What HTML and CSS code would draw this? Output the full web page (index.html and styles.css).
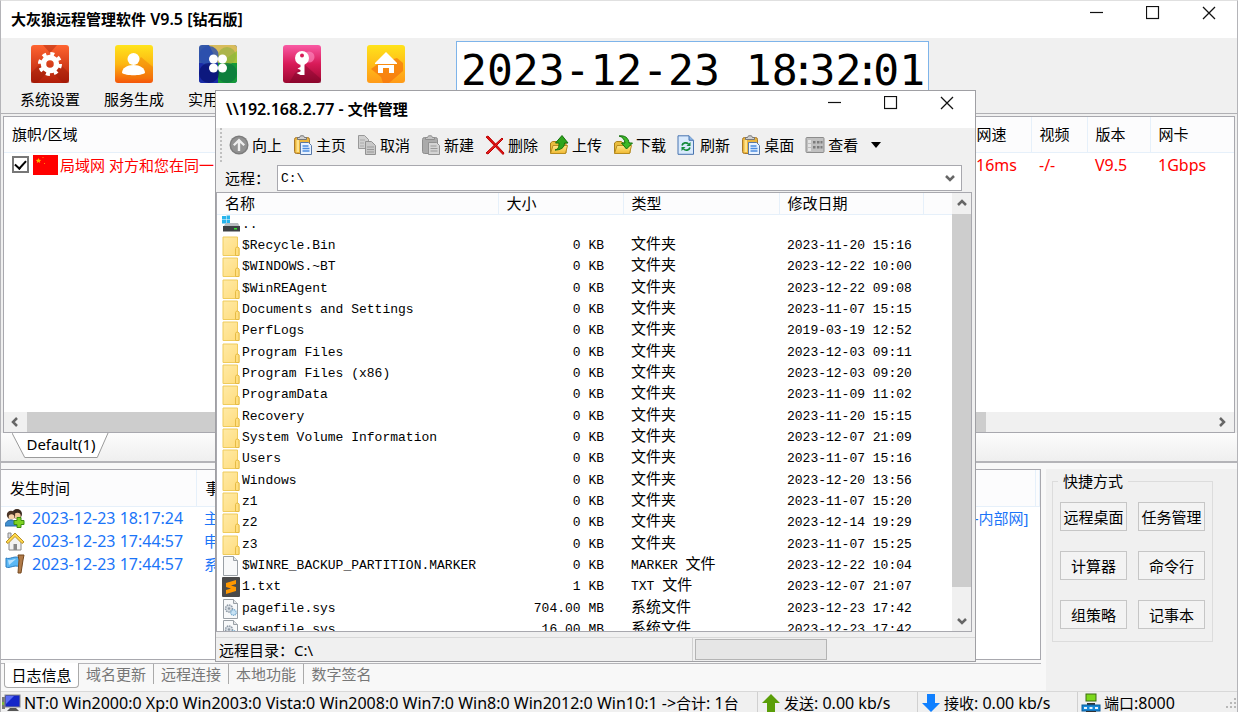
FILE: index.html
```html
<!DOCTYPE html>
<html lang="zh-CN">
<head>
<meta charset="utf-8">
<meta name="viewport" content="width=device-width, initial-scale=1">
<title>大灰狼远程管理软件 V9.5 [钻石版]</title>
<link rel="stylesheet" href="styles.css">
</head>
<body>
<svg class="defs" aria-hidden="true">
  <defs>
    <linearGradient id="gRed" x1="0" y1="0" x2="0" y2="1"><stop offset="0" stop-color="#ff6430"/><stop offset="1" stop-color="#b01c08"/></linearGradient>
    <linearGradient id="gYel" x1="0" y1="0" x2="0" y2="1"><stop offset="0" stop-color="#ffe41c"/><stop offset=".5" stop-color="#fdb813"/><stop offset="1" stop-color="#f4560a"/></linearGradient>
    <linearGradient id="gPink" x1="0" y1="0" x2="0" y2="1"><stop offset="0" stop-color="#f95aa4"/><stop offset=".5" stop-color="#d81a58"/><stop offset="1" stop-color="#9c0830"/></linearGradient>
    <linearGradient id="gHome" x1="0" y1="0" x2="0" y2="1"><stop offset="0" stop-color="#ffe31a"/><stop offset="1" stop-color="#ff9a18"/></linearGradient>
    <linearGradient id="gFold" x1="0" y1="0" x2="1" y2="1"><stop offset="0" stop-color="#ffeaa6"/><stop offset="1" stop-color="#ffdc7c"/></linearGradient>
    <linearGradient id="gOpen" x1="0" y1="0" x2="0" y2="1"><stop offset="0" stop-color="#ffe88a"/><stop offset="1" stop-color="#f0b830"/></linearGradient>
    <clipPath id="tile"><rect width="38" height="38" rx="3"/></clipPath>
    <symbol id="min" viewBox="0 0 14 14"><path d="M0 6.500h13" stroke="#111" stroke-width="1.2"/></symbol>
    <symbol id="max" viewBox="0 0 14 14"><rect x=".500" y=".500" width="12" height="12" fill="none" stroke="#111" stroke-width="1.2"/></symbol>
    <symbol id="close" viewBox="0 0 14 14"><path d="M1 1l12 12M13 1L1 13" stroke="#111" stroke-width="1.3"/></symbol>
    <symbol id="chev" viewBox="0 0 10 10"><path d="M1 3l4 4 4-4" fill="none" stroke="#666" stroke-width="2.500"/></symbol>
    <symbol id="folder" viewBox="0 0 18 20"><path d="M1 1h14.500v10l1.500.8V19.500H1z" fill="url(#gFold)" stroke="#efcb5c"/><path d="M13.500 19.500v-7l1-1.500h1.500l1 1.500v7z" fill="#ffdf80" stroke="#e6bb45"/></symbol>
    <symbol id="file" viewBox="0 0 18 20"><path d="M1.500.5h10l4 4v15h-14z" fill="#f8f9fa" stroke="#9aa0a6"/><path d="M11.500.5v4h4" fill="#e4e6e8" stroke="#9aa0a6"/></symbol>
    <symbol id="sys" viewBox="0 0 18 20"><use href="#file"/><circle cx="7" cy="9.500" r="3.500" fill="#d8dee4" stroke="#8d99a5" stroke-width="1.500" stroke-dasharray="1.500 .8"/><circle cx="7" cy="9.500" r="1.200" fill="#8d99a5"/><circle cx="11.500" cy="13.500" r="2.800" fill="#c7e2f4" stroke="#79abcf" stroke-width="1.300" stroke-dasharray="1.200 .7"/></symbol>
    <symbol id="clip" viewBox="0 0 20 20"><rect x="1.500" y="2.500" width="15" height="16" rx="2" fill="#eab53c" stroke="#a8782a"/><path d="M3.500 5h2.500v12H3.500z" fill="#ffe38c"/><path d="M4.500 4.500V2.500h2l1-1.700h3l1 1.700h2v2z" fill="#d0d0d0" stroke="#777"/><path d="M7.500 7.500h8l3 3v9h-11z" fill="#e9f3ff" stroke="#5878a8"/><path d="M9.500 11h6M9.500 13.500h7M9.500 16h7" stroke="#4b8ce0" stroke-width="1.300"/></symbol>
    <symbol id="clipg" viewBox="0 0 20 20"><rect x="1.500" y="2.500" width="15" height="16" rx="2" fill="#aaa" stroke="#8e8e8e"/><path d="M4.500 4.500V2.500h2l1-1.700h3l1 1.700h2v2z" fill="#c4c4c4" stroke="#8e8e8e"/><path d="M7.500 7.500h8l3 3v9h-11z" fill="#d4d4d4" stroke="#929292"/><path d="M9.500 11h6M9.500 13.500h7M9.500 16h7" stroke="#999" stroke-width="1.200"/></symbol>
    <symbol id="open" viewBox="0 0 20 20"><path d="M1.500 18V8l2-1.500h5L10 8h7v10z" fill="#e9bd3e" stroke="#a8801c"/><path d="M1.500 18.500l2.500-8h14.500l-2 8z" fill="url(#gOpen)" stroke="#b88d20"/></symbol>
  </defs>
</svg>

<main class="app">
  <header class="titlebar">
    <h1 class="title"><span class="zh">大灰狼远程管理软件</span> V9.5 [<span class="zh">钻石版</span>]</h1>
    <div class="winbtns">
      <button class="winbtn" aria-label="最小化"><svg><use href="#min"/></svg></button>
      <button class="winbtn" aria-label="最大化"><svg><use href="#max"/></svg></button>
      <button class="winbtn" aria-label="关闭"><svg><use href="#close"/></svg></button>
    </div>
  </header>

  <nav class="toolbar">
    <div class="tools">
      <button class="tool"><svg viewBox="0 0 38 38"><rect width="38" height="38" rx="3" fill="url(#gRed)"/><path d="M0 28l8-8 8 8-10 10H0zM38 28l-8-8-8 8 10 10h6zM12 0h14l-7 8z" fill="#8e1806" opacity=".35"/><circle cx="19" cy="19" r="9.500" fill="none" stroke="#fff" stroke-width="5" stroke-dasharray="3.730 3.730"/><circle cx="19" cy="19" r="6.500" fill="none" stroke="#fff" stroke-width="5.500"/></svg><span>系统设置</span></button>
      <button class="tool"><svg viewBox="0 0 38 38"><rect width="38" height="38" rx="3" fill="url(#gYel)"/><path d="M26 12l12 10v12H10z" fill="#f07808" opacity=".45"/><circle cx="18.500" cy="14" r="6" fill="#fff"/><path d="M7 28c0-5 5-8 11.500-8S30 23 30 28c-4 3-19 3-23 0z" fill="#fff"/></svg><span>服务生成</span></button>
      <button class="tool"><svg viewBox="0 0 38 38"><g clip-path="url(#tile)"><rect width="38" height="38" fill="#3558a8"/><path d="M10 0h28v10L19 18z" fill="#d8bc5c"/><path d="M38 6v16L19 19z" fill="#a4c43a"/><path d="M19 18l19 0v20H19z" fill="#159a38"/><path d="M0 18h19v20H0z" fill="#1a2ca8"/><circle cx="10" cy="11" r="10" fill="#2b4fae" opacity=".8"/><circle cx="28" cy="11" r="9" fill="#8fb040" opacity=".6"/><circle cx="28" cy="28" r="10" fill="#0c7440" opacity=".7"/><circle cx="10" cy="28" r="10" fill="#07106c" opacity=".7"/></g><g fill="#fff"><circle cx="14.500" cy="14" r="4.500"/><circle cx="23.500" cy="14" r="4.500"/><circle cx="14.500" cy="23" r="4.500"/><circle cx="23.500" cy="23" r="4.500"/></g></svg><span>实用工具</span></button>
      <button class="tool" aria-label="密钥"><svg viewBox="0 0 38 38"><rect width="38" height="38" rx="3" fill="url(#gPink)"/><circle cx="26" cy="12" r="5.500" fill="#ff8fc4" opacity=".6"/><path d="M22 20l16 14v4H6l6-10z" fill="#6e0424" opacity=".35"/><circle cx="19" cy="13" r="7" fill="#fff"/><circle cx="19" cy="10.500" r="2" fill="#d81a58"/><path d="M17.500 18h4v12h-4l-4-2 4-1.500v-1.500l-3-1.500 3-1.500z" fill="#fff"/></svg></button>
      <button class="tool" aria-label="主页"><svg viewBox="0 0 38 38"><rect width="38" height="38" rx="3" fill="url(#gHome)"/><path d="M30 13l6 5v8l-14 12h-6l-2-6-10-8 8-6z" fill="#f4700c" opacity=".65"/><path d="M19 7L8 18v1h22v-1z" fill="#fff"/><path d="M11 20h16v8h-5v-5h-6v5h-5z" fill="#fff"/></svg></button>
    </div>
    <time class="lcd" datetime="2023-12-23T18:32:01">2023-12-23 18<span class="colon">:</span>32<span class="colon">:</span>01</time>
  </nav>

  <section class="hosts">
    <div class="hostlist">
      <table class="hosttable">
        <colgroup><col><col class="c-speed"><col class="c-video"><col class="c-ver"><col class="c-nic"></colgroup>
        <thead><tr><th>旗帜/区域</th><th>网速</th><th>视频</th><th>版本</th><th>网卡</th></tr></thead>
        <tbody><tr>
          <td><label class="host"><input type="checkbox" class="tick" checked><svg class="flag" viewBox="0 0 25 20"><rect width="25" height="20" fill="#f00"/><path d="M5.500 3l.8 1.800 1.900.2-1.400 1.200.4 1.900-1.700-1-1.700 1 .4-1.900L2.800 5l1.900-.2z" fill="#ffb400"/><path d="M9.500 2h1v1h-1zM11 8h1v1h-1z" fill="#ff8a00"/></svg>局域网 对方和您在同一</label></td>
          <td>16ms</td><td>-/-</td><td>V9.5</td><td>1Gbps</td>
        </tr></tbody>
      </table>
      <div class="hscroll"><svg class="arrow left"><use href="#chev"/></svg><div class="thumb"></div><svg class="arrow right"><use href="#chev"/></svg></div>
    </div>
    <div class="grouptabs">
      <button class="grouptab"><svg viewBox="0 0 100 27" preserveAspectRatio="none" aria-hidden="true"><path d="M0 0l13 24.500h74L98 0" fill="#fff" stroke="#999"/></svg><span>Default(1)</span></button>
    </div>
  </section>

  <section class="lower">
    <div class="logs">
      <div class="logbox">
        <table class="logtable">
          <colgroup><col class="c-time"><col><col class="c-end"></colgroup>
          <thead><tr><th>发生时间</th><th>事件</th><th></th></tr></thead>
          <tbody>
            <tr><td><span class="when"><svg viewBox="0 0 20 20"><circle cx="12" cy="6" r="5" fill="#3b2a20"/><circle cx="12.500" cy="8" r="3.200" fill="#f2c79a"/><circle cx="6" cy="7" r="4.200" fill="#4a3426"/><circle cx="6.500" cy="9" r="2.800" fill="#f6d2ab"/><path d="M0 18c0-4 3-6 6-6s6 2 6 6z" fill="#3f8fd0" stroke="#2a6aa4"/><path d="M12 9.500h4v3h3v4h-3v3h-4v-3H9v-4h3z" fill="#7ed321" stroke="#3d8c10"/></svg>2023-12-23 18:17:24</span></td><td><span class="event"><span>主</span><span>-内部网]</span></span></td><td></td></tr>
            <tr><td><span class="when"><svg viewBox="0 0 20 20"><path d="M4 10v9h12v-9l-6-6z" fill="#f3f3f3" stroke="#888"/><path d="M3 2h3v5H3z" fill="#ddd" stroke="#888"/><path d="M1 11L10 2l9 9-2 1.500-7-7-7 7z" fill="#ffd94a" stroke="#b8902a"/><path d="M8.500 13h3.500v6H8.500z" fill="#888"/></svg>2023-12-23 17:44:57</span></td><td>申</td><td></td></tr>
            <tr><td><span class="when"><svg viewBox="0 0 20 20"><path d="M1 4c4 2 8-3 14 0v9c-6-3-10 2-14 0z" fill="#5bb8f5" stroke="#2b7cc0"/><path d="M3 6c3 1 5-1 8-1l-7 6z" fill="#b8e2ff"/><path d="M13 1h6l-1 5-2 13h-3l1-13z" fill="#b07a48" stroke="#74481f"/></svg>2023-12-23 17:44:57</span></td><td>系</td><td></td></tr>
          </tbody>
        </table>
      </div>
      <nav class="logtabs">
        <button class="logtab active">日志信息</button><button class="logtab">域名更新</button><button class="logtab">远程连接</button><button class="logtab">本地功能</button><button class="logtab">数字签名</button>
      </nav>
    </div>
    <aside class="side">
      <fieldset class="quick">
        <legend>快捷方式</legend>
        <button class="qbtn">远程桌面</button><button class="qbtn">任务管理</button>
        <button class="qbtn">计算器</button><button class="qbtn">命令行</button>
        <button class="qbtn">组策略</button><button class="qbtn">记事本</button>
      </fieldset>
    </aside>
  </section>

  <footer class="status">
    <div class="cell systems"><svg viewBox="0 0 20 20"><path d="M1 4h3v12H1z" fill="#777"/><path d="M1 9h2v3H1z" fill="#7db83c"/><rect x="4" y="2" width="15" height="12" fill="#1426c8" stroke="#888"/><path d="M5 3h8L5 11z" fill="#5a6cf4"/><path d="M9 15h6l3 3H6z" fill="#555"/></svg><span>NT:0 Win2000:0 Xp:0 Win2003:0 Vista:0 Win2008:0 Win7:0 Win8:0 Win2012:0 Win10:1 -&gt;<span class="zh">合计</span>: 1<span class="zh">台</span></span></div>
    <div class="cell net"><svg viewBox="0 0 20 20"><path d="M10 1l9 9h-5v9H6v-9H1z" fill="#5a9e08"/></svg><span><span class="zh">发送</span>: 0.00 kb/s</span></div>
    <div class="cell net"><svg viewBox="0 0 20 20"><path d="M10 19l9-9h-5V1H6v9H1z" fill="#1080ff"/></svg><span><span class="zh">接收</span>: 0.00 kb/s</span></div>
    <div class="cell net"><svg viewBox="0 0 20 20"><rect x="5" y="1" width="10" height="7" fill="#7cd81c" stroke="#3c6c10"/><path d="M6 10h8v2H6z" fill="#333"/><rect x="1" y="12" width="18" height="6" fill="#1688d8" stroke="#0c5a98"/><path d="M3 14h3v2H3zM8.500 14h3v2h-3zM14 14h3v2h-3z" fill="#e6f4ff"/><path d="M5 19h10" stroke="#333" stroke-width="2"/></svg><span><span class="zh">端口</span>:8000</span><svg class="grip" viewBox="0 0 12 12"><path d="M9 1h2v2H9zM5 5h2v2H5zM9 5h2v2H9zM1 9h2v2H1zM5 9h2v2H5zM9 9h2v2H9z" fill="#b8b8b8"/></svg></div>
  </footer>
</main>

<section class="dialog" role="dialog" aria-labelledby="dlgtitle">
  <header class="titlebar">
    <h2 class="title" id="dlgtitle">\\192.168.2.77 - <span class="zh">文件管理</span></h2>
    <div class="winbtns">
      <button class="winbtn" aria-label="最小化"><svg><use href="#min"/></svg></button>
      <button class="winbtn" aria-label="最大化"><svg><use href="#max"/></svg></button>
      <button class="winbtn" aria-label="关闭"><svg><use href="#close"/></svg></button>
    </div>
  </header>
  <nav class="filebar">
    <button class="fbtn"><svg viewBox="0 0 20 20"><circle cx="10" cy="10" r="9.500" fill="#7c7c7c"/><circle cx="10" cy="10" r="8" fill="#929292"/><path d="M10 3.500l6 6-1.500 1.500-3.300-3v8H8.800V8l-3.300 3L4 9.500z" fill="#eee"/></svg>向上</button>
    <button class="fbtn"><svg><use href="#clip"/></svg>主页</button>
    <button class="fbtn"><svg viewBox="0 0 20 20"><path d="M1.500.5h6l4 4v9h-10z" fill="#d0d0d0" stroke="#999"/><path d="M3 5h5M3 8h4M3 11h4" stroke="#aaa"/><path d="M8.500 6.500h6l4 4v9h-10z" fill="#c8c8c8" stroke="#929292"/><path d="M10 12h7M10 14.500h7M10 17h7" stroke="#999"/></svg>取消</button>
    <button class="fbtn"><svg><use href="#clipg"/></svg>新建</button>
    <button class="fbtn"><svg viewBox="0 0 20 20"><path d="M1 2l2-1 16 17-1 1.500z" fill="#e01010" stroke="#b00"/><path d="M17 3l1 1L3 19l-2-1z" fill="#e82020" stroke="#b00"/></svg>删除</button>
    <button class="fbtn"><svg viewBox="0 0 20 20"><use href="#open"/><path d="M6 15c4-1 4-4 4-7H6.500L13 .5l6 7.500h-3.500c0 5-4 7-9.500 7z" fill="#2fa51c" stroke="#14700c"/></svg>上传</button>
    <button class="fbtn"><svg viewBox="0 0 20 20"><use href="#open"/><path d="M6 1c6-1 9.500 2 10 7h3.500L13.500 14 8.500 8H12C11.500 4 9.500 2 6 1z" fill="#3cb828" stroke="#14700c"/></svg>下载</button>
    <button class="fbtn"><svg viewBox="0 0 20 20"><path d="M1 .8h11l4.500 4.500v14H1z" fill="#d8e9fc" stroke="#4874b0"/><path d="M12 .8v4.500h4.500" fill="#8db4e4" stroke="#4874b0"/><path d="M5 10.500c.8-3 4.500-3.500 6.500-1.500M13 12.500c-.8 3-4.500 3.500-6.500 1.500" fill="none" stroke="#128a3a" stroke-width="1.700"/><path d="M13.500 7v4h-4zM4.500 16v-4h4z" fill="#128a3a"/></svg>刷新</button>
    <button class="fbtn"><svg><use href="#clip"/></svg>桌面</button>
    <button class="fbtn"><svg viewBox="0 0 20 20"><rect x="1" y="2.500" width="18" height="15" rx="1" fill="#c0c0c0" stroke="#8c8c8c"/><path d="M3 5h3v3H3zM3 9h3v3H3zM3 13h3v3H3z" fill="#e4e4e4"/><path d="M8 6h2.500v2.500H8zM12 6h2.500v2.500H12zM15.500 6h2v2.500h-2zM8 11h2.500v2.500H8zM12 11h2.500v2.500H12zM15.500 11h2v2.500h-2z" fill="#7c7c7c"/></svg>查看</button>
    <svg class="caret" viewBox="0 0 10 6"><path d="M0 0h10L5 6z"/></svg>
  </nav>
  <div class="address">
    <label for="path">远程：</label>
    <div class="combo"><select id="path"><option>C:\</option></select><svg class="drop"><use href="#chev"/></svg></div>
  </div>
  <div class="filebox">
    <div class="files">
      <table class="filetable">
        <colgroup><col class="f-name"><col class="f-size"><col class="f-type"><col class="f-date"><col></colgroup>
        <thead><tr><th>名称</th><th>大小</th><th>类型</th><th>修改日期</th><th></th></tr></thead>
        <tbody>
          <tr><td><span class="name"><svg viewBox="0 0 18 20"><path d="M0 1h4v3.500H0zM4.500.5H8v4H4.500zM0 5h4v3.500H0zM4.500 5H8v4H4.500z" fill="#28b4ec"/><path d="M4 8h12l2 4H1z" fill="#b8bcc0"/><path d="M1 11h17v5.500H1z" fill="#3c4044"/><path d="M12 13h3v1.500h-3z" fill="#30e030"/></svg>..</span></td><td></td><td></td><td></td><td></td></tr>
          <tr><td><span class="name"><svg><use href="#folder"/></svg>$Recycle.Bin</span></td><td>0 KB</td><td><span class="zh">文件夹</span></td><td>2023-11-20 15:16</td><td></td></tr>
          <tr><td><span class="name"><svg><use href="#folder"/></svg>$WINDOWS.~BT</span></td><td>0 KB</td><td><span class="zh">文件夹</span></td><td>2023-12-22 10:00</td><td></td></tr>
          <tr><td><span class="name"><svg><use href="#folder"/></svg>$WinREAgent</span></td><td>0 KB</td><td><span class="zh">文件夹</span></td><td>2023-12-22 09:08</td><td></td></tr>
          <tr><td><span class="name"><svg><use href="#folder"/></svg>Documents and Settings</span></td><td>0 KB</td><td><span class="zh">文件夹</span></td><td>2023-11-07 15:15</td><td></td></tr>
          <tr><td><span class="name"><svg><use href="#folder"/></svg>PerfLogs</span></td><td>0 KB</td><td><span class="zh">文件夹</span></td><td>2019-03-19 12:52</td><td></td></tr>
          <tr><td><span class="name"><svg><use href="#folder"/></svg>Program Files</span></td><td>0 KB</td><td><span class="zh">文件夹</span></td><td>2023-12-03 09:11</td><td></td></tr>
          <tr><td><span class="name"><svg><use href="#folder"/></svg>Program Files (x86)</span></td><td>0 KB</td><td><span class="zh">文件夹</span></td><td>2023-12-03 09:20</td><td></td></tr>
          <tr><td><span class="name"><svg><use href="#folder"/></svg>ProgramData</span></td><td>0 KB</td><td><span class="zh">文件夹</span></td><td>2023-11-09 11:02</td><td></td></tr>
          <tr><td><span class="name"><svg><use href="#folder"/></svg>Recovery</span></td><td>0 KB</td><td><span class="zh">文件夹</span></td><td>2023-11-20 15:15</td><td></td></tr>
          <tr><td><span class="name"><svg><use href="#folder"/></svg>System Volume Information</span></td><td>0 KB</td><td><span class="zh">文件夹</span></td><td>2023-12-07 21:09</td><td></td></tr>
          <tr><td><span class="name"><svg><use href="#folder"/></svg>Users</span></td><td>0 KB</td><td><span class="zh">文件夹</span></td><td>2023-11-07 15:16</td><td></td></tr>
          <tr><td><span class="name"><svg><use href="#folder"/></svg>Windows</span></td><td>0 KB</td><td><span class="zh">文件夹</span></td><td>2023-12-20 13:56</td><td></td></tr>
          <tr><td><span class="name"><svg><use href="#folder"/></svg>z1</span></td><td>0 KB</td><td><span class="zh">文件夹</span></td><td>2023-11-07 15:20</td><td></td></tr>
          <tr><td><span class="name"><svg><use href="#folder"/></svg>z2</span></td><td>0 KB</td><td><span class="zh">文件夹</span></td><td>2023-12-14 19:29</td><td></td></tr>
          <tr><td><span class="name"><svg><use href="#folder"/></svg>z3</span></td><td>0 KB</td><td><span class="zh">文件夹</span></td><td>2023-11-07 15:25</td><td></td></tr>
          <tr><td><span class="name"><svg><use href="#file"/></svg>$WINRE_BACKUP_PARTITION.MARKER</span></td><td>0 KB</td><td>MARKER <span class="zh">文件</span></td><td>2023-12-22 10:04</td><td></td></tr>
          <tr><td><span class="name"><svg viewBox="0 0 18 20"><rect width="18" height="20" rx="1" fill="#4a4a4a"/><path d="M4 6l10-3v4L9 8.500l5 1.500v4L4 17v-4l5-1.500L4 10z" fill="#ff9800"/></svg>1.txt</span></td><td>1 KB</td><td>TXT <span class="zh">文件</span></td><td>2023-12-07 21:07</td><td></td></tr>
          <tr><td><span class="name"><svg><use href="#sys"/></svg>pagefile.sys</span></td><td>704.00 MB</td><td><span class="zh">系统文件</span></td><td>2023-12-23 17:42</td><td></td></tr>
          <tr><td><span class="name"><svg><use href="#sys"/></svg>swapfile.sys</span></td><td>16.00 MB</td><td><span class="zh">系统文件</span></td><td>2023-12-23 17:42</td><td></td></tr>
        </tbody>
      </table>
    </div>
    <div class="vscroll"><svg class="arrow up"><use href="#chev"/></svg><div class="thumb"></div><svg class="arrow"><use href="#chev"/></svg></div>
  </div>
  <footer class="dlgstatus">
    <span class="dir">远程目录：C:\</span>
    <progress class="progress" value="0" max="100" aria-label="进度"></progress>
  </footer>
</section>
</body>
</html>
```
FILE: styles.css
```css
* { box-sizing: border-box; }

body {
  margin: 0;
  font: 15px/20px "Noto Sans", "Noto Sans CJK SC", sans-serif;
  color: #000;
  background: #f0f0f0;
  overflow: hidden;
}

button, input, select, legend, fieldset {
  font: inherit;
  color: inherit;
  margin: 0;
  padding: 0;
  border: 0;
  background: none;
}

svg { display: block; flex: none; }
.defs { position: absolute; width: 0; height: 0; }
table { border-collapse: collapse; table-layout: fixed; width: 100%; }
th, td { padding: 0; font-weight: 400; text-align: left; white-space: nowrap; }
.zh { font-family: "Noto Sans CJK SC", sans-serif; font-size: 15px; line-height: 1px; }

/* Main window */
.app {
  display: flex;
  flex-direction: column;
  height: 100vh;
  overflow: hidden;
  border: 1px solid #b4b4b8;
  border-top-color: #e0e0e0;
  border-bottom: 0;
}

.titlebar {
  display: flex;
  justify-content: space-between;
  flex: none;
  height: 37px;
  padding-left: 10px;
  background: #fff;
}
.title { margin: 0; font-size: 16px; line-height: 36px; font-weight: 600; }
.winbtns { display: flex; height: 24px; }
.winbtn { display: grid; place-items: center; width: 56px; }
.winbtn svg { width: 14px; height: 14px; }

.toolbar {
  display: flex;
  flex: none;
  height: 76px;
  padding: 3px 0 0 7px;
  border-bottom: 1px solid #b0b0b4;
}
.tools { display: flex; width: 448px; padding-top: 4px; }
.tool {
  display: flex;
  flex-direction: column;
  align-items: center;
  gap: 6px;
  width: 84px;
}
.tool svg { width: 38px; height: 38px; }
.lcd {
  width: 473px;
  height: 72px;
  padding-left: 4px;
  overflow: hidden;
  border: 1px solid #7eb4ea;
  background: #fff;
  font: 43px/56px "DejaVu Sans Mono", monospace;
  white-space: pre;
}
.colon { display: inline-flex; justify-content: center; width: 12px; }

.hosts { display: flex; flex-direction: column; flex: 1; min-height: 0; border-bottom: 2px solid #b4b4b8; }
.hostlist {
  display: flex;
  flex-direction: column;
  flex: 1;
  min-height: 0;
  margin: 2px 2px 0;
  border: 1px solid #a8a8ae;
  background: #fff;
}
.hosttable { flex: none; }
.hosttable thead tr { height: 35px; background: #fcfcfd; }
.hosttable th { border-bottom: 1px solid #e6f0fa; border-right: 1px solid #e6f0fa; padding-left: 8px; }
.hosttable th:last-child { border-right: 0; }
.hosttable td { padding-left: 8px; height: 25px; color: #f00; font-size: 16px; }
.hosttable td:first-child { font-size: 15px; }
.c-speed { width: 63px; }
.c-video { width: 56px; }
.c-ver { width: 63px; }
.c-nic { width: 84px; }
.host { display: flex; align-items: center; }
.tick {
  appearance: none;
  display: grid;
  place-items: center;
  width: 17px;
  height: 17px;
  border: 2px solid #777;
  background: #fff;
}
.tick:checked::after {
  content: "";
  width: 9px;
  height: 5px;
  border: solid #000;
  border-width: 0 0 2px 2px;
  transform: rotate(-48deg);
  margin-bottom: 3px;
}
.flag { width: 25px; height: 20px; margin: 0 2px 0 4px; }

.hscroll {
  display: flex;
  align-items: center;
  height: 20px;
  margin-top: auto;
  background: #f0f0f0;
}
.hscroll .arrow { margin: 0 7px 0 6px; }
.hscroll .thumb { width: 78%; height: 20px; background: #cdcdcd; }
.arrow { width: 10px; height: 10px; }
.left { transform: rotate(90deg); }
.right { transform: rotate(-90deg); }
.up { transform: rotate(180deg); }
.hscroll .right { margin-left: auto; }

.grouptabs { flex: none; height: 28px; padding-left: 11px; background: linear-gradient(#fcfcfc, #efefef); }
.grouptab { display: grid; width: 98px; }
.grouptab svg { grid-area: 1 / 1; width: 98px; height: 27px; }
.grouptab span { grid-area: 1 / 1; line-height: 23px; }

/* Log area */
.lower { display: flex; flex: none; height: 228px; padding-top: 6px; background: #f8f8f8; }
.logs { flex: 1; display: flex; flex-direction: column; min-width: 0; }
.logbox { flex: 1; border: 1px solid #a8a8ae; border-left: 0; background: #fff; overflow: hidden; }
.logtable thead tr { height: 36px; background: #fcfcfd; }
.logtable th { padding-left: 9px; border-bottom: 1px solid #e6f0fa; border-right: 1px solid #e6f0fa; }
.logtable td { height: 23px; padding-left: 8px; color: #1a74f8; }
.logtable td:first-child { padding-left: 4px; font-size: 16px; }
.c-time { width: 195px; }
.c-end { width: 4px; }
.when { display: flex; align-items: center; gap: 7px; }
.when svg { width: 20px; height: 20px; }
.event { display: flex; justify-content: space-between; padding-right: 7px; }

.logtabs { display: flex; flex: none; height: 28px; margin-top: 3px; border-top: 1px solid #b4b4b8; background: #f8f8f8; }
.logtab { width: 75px; height: 20px; line-height: 20px; border-right: 1px solid #aaa; color: #777; }
.logtab:last-child { border-right: 0; }
.logtab.active {
  height: 25px;
  margin: -1px 0 0 3px;
  color: #000;
  background: #fff;
  border: 1px solid #aaa;
  border-top: 0;
  border-radius: 0 0 4px 4px;
}

.side { flex: none; width: 191px; margin-left: 5px; padding: 2px 24px 0 6px; background: #f0f0f0; }
.quick {
  display: grid;
  grid-template-columns: 67px 67px;
  gap: 20px 11px;
  padding: 11px 7px 12px;
  border: 1px solid #dcdcdc;
}
.quick legend { margin-left: -2px; padding: 0 5px; }
.quick .qbtn { height: 29px; border: 1px solid #c6c6c6; background: #f3f3f3; white-space: nowrap; }

/* Status bar */
.status { display: flex; flex: none; height: 21px; border-top: 1px solid #d8d8d8; background: #f0f0f0; font-size: 16px; }
.cell { display: flex; align-items: center; gap: 3px; padding: 2px 0 0 3px; border-left: 1px solid #d0d0d0; white-space: nowrap; overflow: hidden; }
.cell svg { width: 20px; height: 20px; }
.systems { flex: 1; border-left: 0; padding-left: 0; }
.net { width: 160px; }
.cell .grip { width: 12px; height: 12px; margin-left: auto; }

/* File manager window */
.dialog {
  position: absolute;
  left: 215px;
  top: 90px;
  width: 761px;
  height: 572px;
  display: flex;
  flex-direction: column;
  border: 1px solid #a0a0a4;
  background: #f0f0f0;
}

.filebar {
  display: flex;
  align-items: center;
  gap: 11px;
  flex: none;
  height: 34px;
  margin-left: 4px;
  padding-left: 7px;
  border-left: 2px dotted #c0c0c0;
}
.fbtn { display: flex; align-items: center; gap: 3px; }
.fbtn svg { width: 20px; height: 20px; }
.caret { width: 10px; height: 6px; margin-left: 2px; }

.address { display: flex; align-items: center; padding: 3px 13px 1px 9px; }
.address label { width: 52px; line-height: 24px; }
.combo { flex: 1; display: grid; align-items: center; }
.combo select {
  grid-area: 1 / 1;
  appearance: none;
  height: 26px;
  padding-left: 3px;
  border: 1px solid #a8a8ae;
  background: #fff;
  font: 13px "Liberation Mono", monospace;
}
.drop { grid-area: 1 / 1; justify-self: end; width: 10px; height: 10px; margin-right: 7px; pointer-events: none; }

.filebox {
  display: flex;
  flex: 1;
  min-height: 0;
  margin-right: 3px;
  border: 1px solid #a8a8ae;
  background: #fff;
}
.files { flex: 1; overflow: hidden; }
.filetable { font: 13px/20px "Liberation Mono", "Noto Sans CJK SC", monospace; }
.filetable thead { font: 15px/20px "Noto Sans CJK SC", sans-serif; }
.filetable thead tr { height: 21px; background: #fcfcfd; }
.filetable th { padding-left: 8px; border-right: 1px solid #e6f0fa; border-bottom: 1px solid #e6f0fa; }
.filetable th:last-child { border-right: 0; }
.filetable td { height: 21px; padding-left: 8px; line-height: 20px; }
.filetable tr:nth-child(3n) td { height: 22px; }
.filetable td:first-child { padding-left: 5px; }
.filetable td:nth-child(2) { text-align: right; padding-right: 19px; }
.f-name { width: 281px; }
.f-size { width: 125px; }
.f-type { width: 156px; }
.f-date { width: 144px; }
.name { display: flex; align-items: center; gap: 2px; }
.name svg { width: 18px; height: 20px; }

.vscroll {
  display: flex;
  flex-direction: column;
  align-items: center;
  justify-content: space-between;
  width: 19px;
  padding: 5px 0;
  background: #f0f0f0;
}
.vscroll .thumb { width: 19px; height: 373px; margin: 6px 0 auto; background: #cdcdcd; }

.dlgstatus {
  display: flex;
  flex: none;
  height: 24px;
  margin-top: 5px;
  border-top: 1px solid #d8d8d8;
}
.dir { width: 477px; padding-left: 3px; line-height: 24px; border-right: 1px solid #d0d0d0; }
.progress {
  appearance: none;
  width: 132px;
  height: 21px;
  margin: 1px 0 0 2px;
  border: 1px solid #b4b4b4;
  background: #e6e6e6;
}
.progress::-webkit-progress-bar { background: #e6e6e6; }
```
